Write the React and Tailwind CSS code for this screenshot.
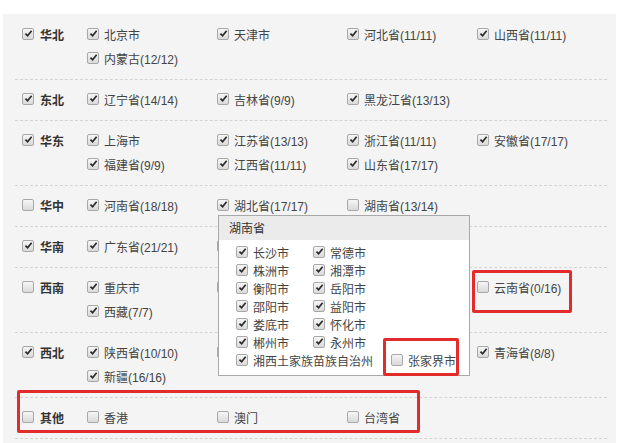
import React from 'react';

// items hidden under the popup keep only their checkbox (label null)
const regions = [
  { name: '华北', on: true, items: [['北京市', 1], ['天津市', 1], ['河北省(11/11)', 1], ['山西省(11/11)', 1], ['内蒙古(12/12)', 1]] },
  { name: '东北', on: true, items: [['辽宁省(14/14)', 1], ['吉林省(9/9)', 1], ['黑龙江省(13/13)', 1]] },
  { name: '华东', on: true, items: [['上海市', 1], ['江苏省(13/13)', 1], ['浙江省(11/11)', 1], ['安徽省(17/17)', 1], ['福建省(9/9)', 1], ['江西省(11/11)', 1], ['山东省(17/17)', 1]] },
  { name: '华中', on: false, items: [['河南省(18/18)', 1], ['湖北省(17/17)', 1], ['湖南省(13/14)', 0]] },
  { name: '华南', on: true, items: [['广东省(21/21)', 1], [null, 1]] },
  { name: '西南', on: false, items: [['重庆市', 1], [null, 1], [null, 1], ['云南省(0/16)', 0], ['西藏(7/7)', 1]] },
  { name: '西北', on: true, items: [['陕西省(10/10)', 1], [null, 1], [null, 1], ['青海省(8/8)', 1], ['新疆(16/16)', 1]] },
  { name: '其他', on: false, items: [['香港', 0], ['澳门', 0], ['台湾省', 0]] },
];

const hunan = [
  ['长沙市', '常德市'],
  ['株洲市', '湘潭市'],
  ['衡阳市', '岳阳市'],
  ['邵阳市', '益阳市'],
  ['娄底市', '怀化市'],
  ['郴州市', '永州市'],
];

// old-style grey checkbox
const Box = ({ on }) => (
  <span className="mb-[3px] flex h-[12px] w-[12px] shrink-0 items-center justify-center rounded-[2px] border border-[#a8a8a8] bg-linear-to-b from-[#f6f6f6] to-[#d9d9d9]">
    {on ? (
      <svg viewBox="0 0 10 10" className="h-[9px] w-[9px]">
        <path d="M1.6 5.2 L4 7.6 L8.5 2" fill="none" stroke="#2b2b2b" strokeWidth="1.9" />
      </svg>
    ) : null}
  </span>
);

const Item = ({ label, on, className = '' }) => (
  <div className={`flex h-6 items-center gap-[5px] whitespace-nowrap ${className}`}>
    <Box on={on} />
    {label ? <span className="translate-y-[1px]">{label}</span> : null}
  </div>
);

export default function App() {
  return (
    <div
      className="relative h-[443px] w-[628px] overflow-hidden bg-white text-[12px] text-[#444]"
      style={{ fontFamily: '"Liberation Sans", "Noto Sans CJK SC", sans-serif' }}
    >
      <div className="ml-[3px] mt-[14px] w-[613px] bg-[#f4f4f4] pb-6 pl-3 pr-[9px] pt-[1px]">
        {regions.map((r) => (
          <div key={r.name} className="flex border-b border-dashed border-[#d4d4d4] py-2">
            <div className="flex h-6 w-[72px] shrink-0 items-center gap-[6px] pl-[7px]">
              <Box on={r.on} />
              <span className="translate-y-[1px] font-bold text-[#333]">{r.name}</span>
            </div>
            <div className="grid grid-cols-[130px_130px_130px_130px]">
              {r.items.map(([label, on], i) => (
                <Item key={i} label={label} on={!!on} />
              ))}
            </div>
          </div>
        ))}
      </div>

      {/* 湖南省 popup */}
      <div className="absolute left-[218px] top-[215px] w-[252px] border border-[#a9a9a9] bg-white">
        <div className="flex h-6 items-center bg-[#ebebeb] pl-[10px] text-[#333]">
          <span className="translate-y-[1px]">湖南省</span>
        </div>
        <div className="pb-[5px] pl-[17px] pt-[4px]">
          {hunan.map(([a, b]) => (
            <div key={a} className="grid grid-cols-[77px_77px]">
              <Item label={a} on className="!h-[18px]" />
              <Item label={b} on className="!h-[18px]" />
            </div>
          ))}
          <div className="flex">
            <Item label="湘西土家族苗族自治州" on className="!h-[18px]" />
            <Item label="张家界市" on={false} className="!h-[18px] ml-[18px]" />
          </div>
        </div>
      </div>

      {/* red annotation boxes */}
      <div className="absolute left-[472px] top-[270px] h-[43px] w-[100px] rounded-[2px] border-[3px] border-[#e32b2b]" />
      <div className="absolute left-[383px] top-[338px] h-[38px] w-[76px] rounded-[2px] border-[3px] border-[#e32b2b]" />
      <div className="absolute left-[17px] top-[390px] h-[43px] w-[403px] rounded-[2px] border-[3px] border-[#e32b2b]" />
    </div>
  );
}
